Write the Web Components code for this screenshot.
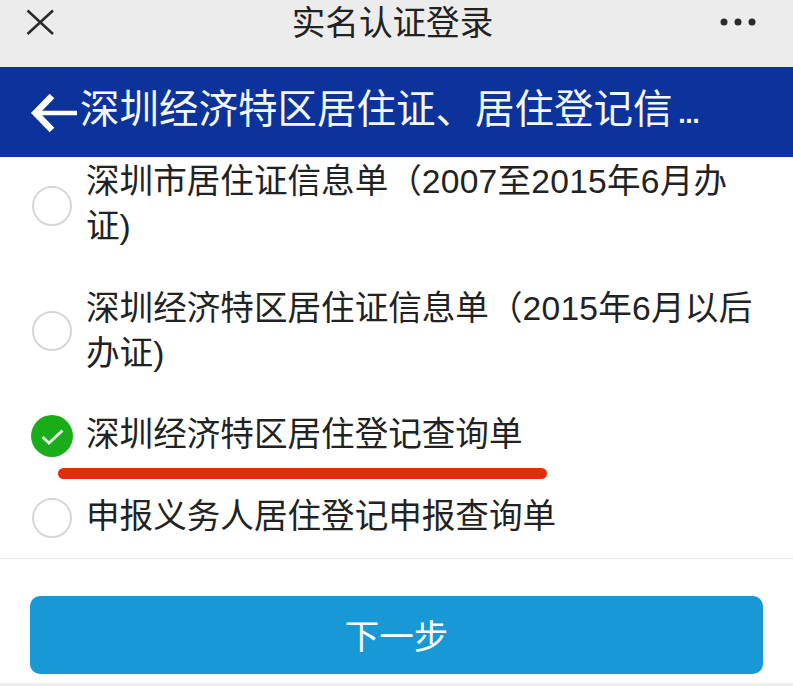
<!DOCTYPE html>
<html lang="zh"><head><meta charset="utf-8">
<style>
html,body{margin:0;padding:0;background:#fff}
body{width:793px;height:686px;overflow:hidden;position:relative;font-family:"Liberation Sans","Noto Sans CJK SC",sans-serif}
</style></head><body>
<app-page>
  <nav-bar slot="top" title="实名认证登录"></nav-bar>
  <blue-header slot="top">深圳经济特区居住证、居住登记信<span style="letter-spacing:-4px;margin-left:4px">...</span></blue-header>
  <option-row>深圳市居住证信息单（<span style="letter-spacing:.25px">2007至2015年6月办</span><br>证)</option-row>
  <option-row style="padding-top:19px;--mt:-1px">深圳经济特区居住证信息单（<span style="letter-spacing:.25px">2015年6月以后</span><br>办证)</option-row>
  <option-row checked>深圳经济特区居住登记查询单</option-row>
  <option-row style="padding-top:19px">申报义务人居住登记申报查询单</option-row>
  <next-button slot="footer">下一步</next-button>
</app-page>
<script>
function def(name,html,init){
  customElements.define(name,class extends HTMLElement{
    connectedCallback(){
      if(this.shadowRoot)return;
      const r=this.attachShadow({mode:'open'});
      r.innerHTML=html;
      if(init)init.call(this,r);
    }
  });
}
def('app-page',`<style>
:host{display:flex;flex-direction:column;height:686px;position:relative}
.list{display:flex;flex-direction:column;height:402px;box-sizing:border-box;border-bottom:1px solid #e8e8e8}
::slotted(option-row:first-of-type){padding-top:2px}
.foot{padding:37px 30px 0;flex:1;display:flex;flex-direction:column}
.strip{margin-top:auto;height:3px;background:#eeeeee;margin-left:-30px;margin-right:-30px}
.mark{position:absolute;left:58px;top:468px;width:489px;height:11px;border-radius:6px;background:#e62a0b}
</style>
<slot name="top"></slot>
<div class="list"><slot></slot></div>
<div class="foot"><slot name="footer"></slot><div class="strip"></div></div>
<div class="mark"></div>`);
def('nav-bar',`<style>
:host{display:flex;align-items:center;justify-content:center;position:relative;height:67px;box-sizing:border-box;padding:0 8px 20px 0;background:#ececec;color:#222;font-size:33.6px;line-height:47px}
svg{position:absolute;top:0;display:block}
</style>
<svg style="left:0" width="80" height="48" viewBox="0 0 80 48"><path d="M27.5 10.5 53 34M53 10.500 27.500 34" fill="none" stroke="#2b2b2b" stroke-width="2.600"/></svg>
<span id="t"></span>
<svg style="right:0" width="90" height="48" viewBox="703 0 90 48"><circle cx="724" cy="22" r="3.500" fill="#2b2b2b"/><circle cx="738" cy="22" r="3.500" fill="#2b2b2b"/><circle cx="752" cy="22" r="3.500" fill="#2b2b2b"/></svg>`,
function(r){r.getElementById('t').textContent=this.getAttribute('title');});
def('blue-header',`<style>
:host{display:flex;align-items:center;gap:3px;height:90px;box-sizing:border-box;padding:0 0 0 29px;background:#0b339b;color:#f4f7fc;white-space:nowrap}
svg{display:block;flex:none;margin-top:1px}
div{font-size:39.5px;line-height:47px;margin-top:-6px}
</style>
<svg width="48" height="44" viewBox="29 90 48 44"><path d="M52 95 35.500 112 52 129" fill="none" stroke="#fff" stroke-width="6.500" stroke-linejoin="miter"/><path d="M37 112H77" stroke="#fff" stroke-width="4.500"/></svg>
<div><slot></slot></div>`);
def('option-row',`<style>
:host{display:flex;align-items:center;gap:14px;padding:18px 0 18px 32px;color:#222;font-size:33.6px}
.txt{line-height:45px;flex:1;white-space:nowrap}
.r{width:40px;height:40px;flex:none;box-sizing:border-box;border:2px solid #d6d6d6;border-radius:50%;background:#fff;margin-top:var(--mt,3px)}
svg{display:none;width:42px;height:42px;flex:none;margin:var(--mt,3px) -1px 0 -1px}
:host([checked]) .r{display:none}
:host([checked]) svg{display:block}
</style>
<div class="r"></div>
<svg viewBox="0 0 42 42"><circle cx="21" cy="21" r="21" fill="#1aad19"/><path d="M11.500 22 18 28 31.500 15.500" fill="none" stroke="#e8f7e8" stroke-width="2.800"/></svg>
<div class="txt"><slot></slot></div>`);
def('next-button',`<style>
:host{display:flex;align-items:center;justify-content:center;height:78px;border-radius:10px;background:#1899d6;color:#fff;font-size:34.500px;box-sizing:border-box;padding-bottom:2px}
</style><slot></slot>`);
</script>
</body></html>
